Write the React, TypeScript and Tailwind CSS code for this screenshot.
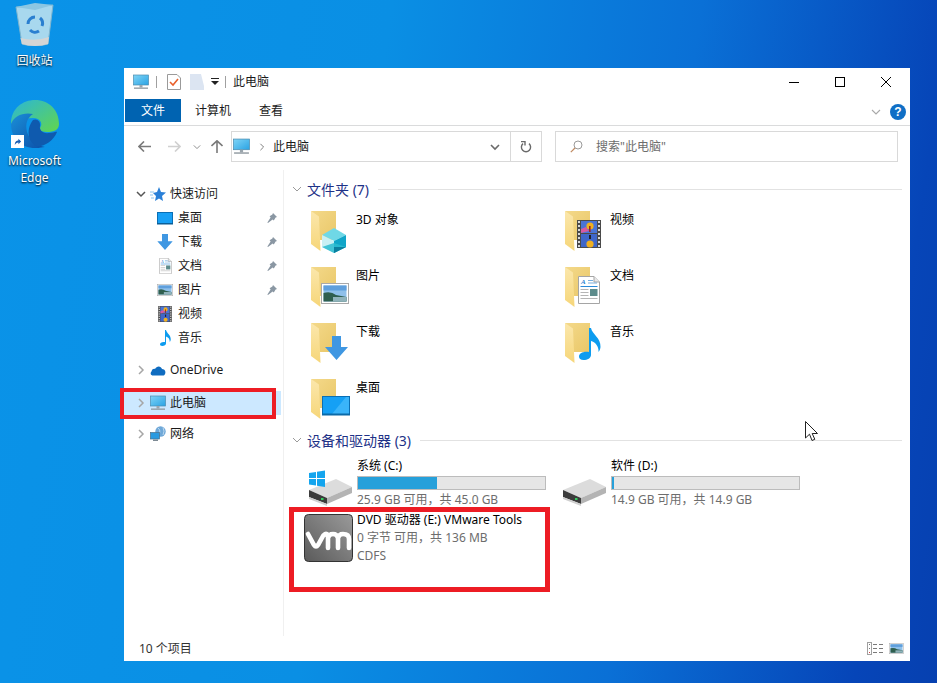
import React from "react";

const PcIcon = ({ className = "w-4 h-4" }: { className?: string }) => (
  <svg viewBox="0 0 16 16" className={className}>
    <defs>
      <linearGradient id="pcg" x1="0" y1="0" x2="1" y2="1">
        <stop offset="0" stopColor="#7fd4f6" />
        <stop offset="1" stopColor="#2aa3e4" />
      </linearGradient>
    </defs>
    <rect x="0.5" y="1" width="15" height="10" fill="url(#pcg)" stroke="#4a8cb0" strokeWidth="0.7" />
    <rect x="6.5" y="11" width="3" height="2.5" fill="#9aa5ad" />
    <rect x="1" y="13.5" width="14" height="1.3" fill="#8d979e" />
  </svg>
);

const Chevron = ({ dir, className = "", color = "#a6a6a6", w = 1.5 }: { dir: "r" | "d"; className?: string; color?: string; w?: number }) => (
  <svg viewBox="0 0 10 10" className={className}>
    <path d={dir === "r" ? "M3 1 L7 5 L3 9" : "M1 3 L5 7 L9 3"} fill="none" stroke={color} strokeWidth={w} />
  </svg>
);

const Pin = () => (
  <svg viewBox="0 0 10 10" className="w-[10px] h-[10px]">
    <path d="M6 0 L10 4 L8.6 4.6 L6.8 7.6 L5.6 6.6 L1 10 L0.4 9.4 L3.6 4.6 L2.6 3.2 L5.4 1.4 Z" fill="#8a97a3" />
  </svg>
);

const Landscape = () => (
  <g>
    <rect x="0.5" y="0.5" width="27" height="20" fill="#fff" stroke="#a9a9a9" />
    <rect x="2.5" y="2.5" width="23" height="16" fill="#8fc0ea" />
    <rect x="2.5" y="2.5" width="23" height="5" fill="#5f9fdc" />
    <path d="M2.5 10 Q10 8 15 12 L25.5 14 V18.5 H2.5 Z" fill="#2f5f4f" />
    <rect x="12" y="14" width="13.5" height="4.5" fill="#90b3bb" />
  </g>
);

const FilmStrip = () => (
  <g>
    <rect x="0" y="0" width="24" height="28" fill="#4a4a4a" />
    {[1, 5, 9, 13, 17, 21, 25].map((y) => (
      <g key={y}>
        <rect x="1" y={y} width="2" height="2" fill="#d8d8d8" />
        <rect x="21" y={y} width="2" height="2" fill="#d8d8d8" />
      </g>
    ))}
    <rect x="4" y="1" width="16" height="12" fill="#4a74d6" />
    <rect x="4" y="14" width="16" height="13" fill="#3f66c8" />
    <path d="M4 9 L9 7 L12 11 L4 13 Z" fill="#d85aa0" />
    <circle cx="13" cy="6" r="3.6" fill="#f0b020" />
    <rect x="12" y="6" width="1.6" height="6" fill="#a02020" />
    <circle cx="13" cy="24" r="3.6" fill="#f0b020" />
    <rect x="12" y="15" width="2" height="4" fill="#222" />
  </g>
);

const DocThumb = () => (
  <g>
    <path d="M0.5 0.5 H16 L21.5 6 V27.5 H0.5 Z" fill="#fff" stroke="#a5a5a5" />
    <path d="M16 0.5 V6 H21.5" fill="#e8e8e8" stroke="#a5a5a5" />
    <text x="3" y="8" fontSize="7" fontStyle="italic" fontWeight="700" fill="#2a7fd0" fontFamily="Liberation Serif, serif">A</text>
    <rect x="10" y="4" width="5" height="1" fill="#7aaedc" />
    <rect x="10" y="6.5" width="9" height="1" fill="#7aaedc" />
    <rect x="2.5" y="10" width="17" height="1" fill="#2a8ad8" />
    <rect x="2.5" y="13" width="8" height="1" fill="#b5b5b5" />
    <rect x="2.5" y="16" width="8" height="1" fill="#b5b5b5" />
    <rect x="2.5" y="19" width="8" height="1" fill="#b5b5b5" />
    <rect x="2.5" y="22" width="17" height="1" fill="#b5b5b5" />
    <rect x="12" y="13" width="7.5" height="7" fill="#5d8c8c" />
  </g>
);

const Folder = ({ children }: { children?: React.ReactNode }) => (
  <svg viewBox="0 0 48 48" className="w-12 h-12 shrink-0">
    <defs>
      <linearGradient id="fb" x1="0" y1="0" x2="1" y2="1">
        <stop offset="0" stopColor="#f4d98a" />
        <stop offset="1" stopColor="#e9c768" />
      </linearGradient>
      <linearGradient id="ff" x1="0" y1="0" x2="0" y2="1">
        <stop offset="0" stopColor="#fbe7ac" />
        <stop offset="1" stopColor="#f6d679" />
      </linearGradient>
    </defs>
    <path d="M5 2 H30 V31 H14 Z" fill="url(#fb)" />
    <path d="M5 2 L13 7.5 L14.5 42 L5 35 Z" fill="url(#ff)" />
    {children}
  </svg>
);

const Cube = () => (
  <g transform="translate(16 19)">
    <path d="M0 7 L12 0 L24 7 L12 13 Z" fill="#6fd8e6" />
    <path d="M0 7 L12 13 V25 L0 19 Z" fill="#c9f0f4" />
    <path d="M12 13 L24 7 V19 L12 25 Z" fill="#10a5c8" />
    <path d="M0 19 L12 15 L24 19 L12 25 Z" fill="#2bbcd0" opacity="0.85" />
    <path d="M12 19 L24 19 L12 25 Z" fill="#0b7f9f" />
  </g>
);

const DownArrow = ({ c = "#3f97e2" }: { c?: string }) => (
  <path d="M7 0 H16 V11 H23 L11.5 24 L0 11 H7 Z" fill={c} />
);

const Note = ({ c = "#0d9cef" }: { c?: string }) => (
  <path d="M10 0 H12 C13 6 22 10 21.5 19 C21.3 21 20.5 23 19.5 24 C20 18 16 14 12 13 V27 C12 30 8.5 32 4.5 32 C1.5 32 0 30.5 0 28.5 C0 25.5 4 23 10 24 Z" fill={c} />
);

const DesktopThumb = () => (
  <g>
    <rect x="0.5" y="0.5" width="27" height="18" fill="#15a0f5" stroke="#0a6fb5" />
    <path d="M10 18 L24 1 H27 V18 Z" fill="#3ab4fa" />
    <rect x="0" y="17.5" width="28" height="2" fill="#0b6aa8" />
  </g>
);

const Row = ({ icon, label, pin, className = "" }: { icon: React.ReactNode; label: string; pin?: boolean; className?: string }) => (
  <div className={`h-6 flex items-center pl-[33px] ${className}`}>
    <div className="w-4 h-4 flex items-center justify-center mr-[5px]">{icon}</div>
    <span>{label}</span>
    {pin && (
      <span className="ml-auto mr-[4px]">
        <Pin />
      </span>
    )}
  </div>
);

const TopRow = ({ icon, label, open, className = "" }: { icon: React.ReactNode; label: string; open?: boolean; className?: string }) => (
  <div className={`h-6 flex items-center ${className}`}>
    <div className="w-[26px] flex justify-end pr-[4px]">
      <Chevron dir={open ? "d" : "r"} color={open ? "#555" : "#a6a6a6"} className="w-[10px] h-[10px]" />
    </div>
    <div className="w-4 h-4 flex items-center justify-center mr-[4px]">{icon}</div>
    <span>{label}</span>
  </div>
);

const GroupHeader = ({ text }: { text: string }) => (
  <div className="h-5 flex items-center pl-[7px] pr-[8px]">
    <Chevron dir="d" color="#9a9a9a" w={1} className="w-[10px] h-[10px] mr-[5px]" />
    <span className="text-[14px] text-[#1e3287] whitespace-nowrap">{text}</span>
    <div className="flex-1 h-px bg-[#e2e2e2] ml-[9px]" />
  </div>
);

const FolderItem = ({ label, children }: { label: string; children?: React.ReactNode }) => (
  <div className="h-12 flex text-black">
    <Folder>{children}</Folder>
    <span className="ml-[2px] mt-[2px]">{label}</span>
  </div>
);

const DriveSvg = ({ win }: { win?: boolean }) => (
  <svg viewBox="0 0 48 42" className="w-12 h-[42px] shrink-0">
    <path d="M2 25 L29 14 L45 22 L20 33 Z" fill="#dcdcdc" />
    <path d="M20 33 L45 22 V28 L20 39 Z" fill="#b4b4b4" />
    <path d="M2 25 L20 33 V39 L2 32 Z" fill="#3c3c3c" />
    <path d="M2 32 L20 39 V41 L2 34 Z" fill="#cfcfcf" />
    <rect x="14" y="33" width="2.5" height="2" fill="#35d060" />
    {win && (
      <g fill="#14a5ee">
        <path d="M2 8 L9 7 V13 H2 Z" />
        <path d="M10 6.8 L18 5.5 V13 H10 Z" />
        <path d="M2 14 H9 V20.5 L2 19.5 Z" />
        <path d="M10 14 H18 V22 L10 20.7 Z" />
      </g>
    )}
  </svg>
);

const VmLogo = () => (
  <svg viewBox="0 0 49 48" className="w-[49px] h-12 shrink-0">
    <defs>
      <linearGradient id="vmg" x1="0" y1="1" x2="1" y2="0">
        <stop offset="0" stopColor="#5a5a5a" />
        <stop offset="1" stopColor="#9a9a9a" />
      </linearGradient>
    </defs>
    <rect x="0.5" y="0.5" width="48" height="47" rx="4" fill="url(#vmg)" stroke="#333" />
    <path
      d="M4 20 L10 31 Q12 34 14 31 L19 22 M20 21 Q22 19 24 21 V34 M24 24 Q25 20 29 20 Q33 20 34 24 V34 M34 24 Q35 20 39 20 Q45 20 45 25 V34"
      fill="none"
      stroke="#fff"
      strokeWidth="4.6"
      strokeLinecap="round"
    />
  </svg>
);

const Bar = ({ pct }: { pct: string }) => (
  <div className="w-[189px] h-[15px] border border-[#bcbcbc] bg-[#e6e6e6] my-[2px]">
    <div className="h-full bg-[#26a0da]" style={{ width: pct }} />
  </div>
);

const Drive = ({ name, free, pct, win }: { name: string; free: string; pct: string; win?: boolean }) => (
  <div className="h-[50px] flex">
    <div className="pt-[7px] -ml-[2px] mr-[2px]">
      <DriveSvg win={win} />
    </div>
    <div className="flex flex-col">
      <span className="h-[16px] leading-[16px] text-black">{name}</span>
      <Bar pct={pct} />
      <span className="h-[16px] leading-[16px] text-[#6d6d6d]">{free}</span>
    </div>
  </div>
);

export default function App() {
  return (
    <div className="relative w-[937px] h-[683px] overflow-hidden bg-[linear-gradient(98deg,#0a93e8_0%,#0a8fe4_38%,#0a70d6_68%,#0645b8_92%,#0640b0_100%)] font-['Noto_Sans','Noto_Sans_CJK_SC',sans-serif] text-[12px]">
      {/* desktop icons */}
      <div className="absolute left-0 top-[2px] w-[69px] flex flex-col items-center text-white [text-shadow:0_1px_2px_#000]">
        <svg viewBox="0 0 40 44" className="w-[40px] h-[44px]">
          <path d="M1 5 L38 3 L33 42 Q20 46 7 42 Z" fill="#a8d8ee" stroke="#7fb5cf" strokeWidth="1" />
          <path d="M1 5 L20 1 L38 3 L20 8 Z" fill="#8cc6e2" />
          <path d="M5.5 36 Q20 40 34 35 L33 42 Q20 46 7 42 Z" fill="#d5d5d5" />
          <g fill="none" stroke="#2a7fd0" strokeWidth="3">
            <path d="M13 22 A7 7 0 0 1 20 15" />
            <path d="M25 16 A7 7 0 0 1 27 24" />
            <path d="M24 29 A7 7 0 0 1 15 28" />
          </g>
        </svg>
        <span className="mt-[7px] leading-[16px]">回收站</span>
      </div>
      <div className="absolute left-0 top-[100px] w-[69px] flex flex-col items-center text-white [text-shadow:0_1px_2px_#000]">
        <div className="relative w-12 h-12">
          <svg viewBox="0 0 48 48" className="w-12 h-12">
            <defs>
              <linearGradient id="eg1" x1="0" y1="0" x2="1" y2="1">
                <stop offset="0" stopColor="#2bb6d8" />
                <stop offset="1" stopColor="#62d64c" />
              </linearGradient>
              <linearGradient id="eg2" x1="0" y1="0" x2="1" y2="1">
                <stop offset="0" stopColor="#1a8fd8" />
                <stop offset="1" stopColor="#0c4fa8" />
              </linearGradient>
            </defs>
            <path d="M0 24 C0 8 12 0 24 0 C38 0 48 10 48 24 C48 30 43 32 36 32 C29 32 28 29 30 26 C31 24 30 18 22 18 C12 18 4 22 0 24 Z" fill="url(#eg1)" />
            <path d="M0 24 C3 16 12 12 22 14 C16 18 14 24 16 32 C18 39 26 46 34 47 C28 48 26 48 24 48 C10 48 0 38 0 24 Z" fill="url(#eg2)" />
            <path d="M22 20 C26 18 30 22 29 26 C28 30 32 34 38 33 C42 33 45 31 46 32 C42 42 32 47 26 46 C18 44 14 30 22 20 Z" fill="#0f5aae" />
          </svg>
          <div className="absolute left-0 bottom-0 w-[13px] h-[13px] bg-white flex items-center justify-center">
            <svg viewBox="0 0 10 10" className="w-[9px] h-[9px]">
              <path d="M2 9 C2 5 4 4 6 4 V2 L9 5 L6 8 V6 C4 6 3 7 2 9 Z" fill="#1a5fb4" />
            </svg>
          </div>
        </div>
        <span className="mt-[4px] leading-[17px]">Microsoft</span>
        <span className="leading-[17px]">Edge</span>
      </div>

      {/* window */}
      <div className="absolute left-[124px] top-[68px] w-[786px] h-[593px] bg-white flex flex-col text-[#1a1a1a]">
        {/* title bar */}
        <div className="h-[28px] flex items-center shrink-0">
          <PcIcon className="w-4 h-4 ml-[9px]" />
          <div className="w-px h-3 bg-[#a0a0a0] ml-[7px]" />
          <svg viewBox="0 0 14 16" className="w-[14px] h-4 ml-[10px]">
            <path d="M0.5 0.5 H10 L13.5 4 V15.5 H0.5 Z" fill="#fff" stroke="#9a9a9a" />
            <path d="M3 8 L6 11 L11 5" fill="none" stroke="#e8602c" strokeWidth="1.6" />
          </svg>
          <svg viewBox="0 0 14 16" className="w-[14px] h-4 ml-[9px]">
            <path d="M0 0 H11 L14 12 V16 H0 Z" fill="#dce5f2" />
          </svg>
          <svg viewBox="0 0 8 8" className="w-2 h-2 ml-[7px]">
            <rect x="0" y="0" width="8" height="1" fill="#222" />
            <path d="M0 3 H8 L4 7 Z" fill="#222" />
          </svg>
          <div className="w-px h-3 bg-[#a0a0a0] ml-[6px]" />
          <span className="ml-[7px]">此电脑</span>
          <div className="ml-auto flex items-center">
            <div className="w-[46px] flex justify-center">
              <div className="w-[10px] h-px bg-black" />
            </div>
            <div className="w-[46px] flex justify-center">
              <div className="w-[10px] h-[10px] border border-black" />
            </div>
            <div className="w-[46px] flex justify-center mr-[1px]">
              <svg viewBox="0 0 10 10" className="w-[10px] h-[10px]">
                <path d="M0 0 L10 10 M10 0 L0 10" stroke="#000" strokeWidth="1" />
              </svg>
            </div>
          </div>
        </div>
        {/* ribbon tabs */}
        <div className="h-[30px] shrink-0 border-b border-[#dadbdc] flex pt-[3px] pr-[4px]">
          <div className="w-[56px] h-[23px] ml-px bg-[#0063b1] text-white flex items-center justify-center">文件</div>
          <span className="h-[23px] leading-[23px] ml-[14px]">计算机</span>
          <span className="h-[23px] leading-[23px] ml-[28px]">查看</span>
          <div className="ml-auto flex items-center h-[23px] mt-[1px]">
            <Chevron dir="d" color="#a8a8a8" w={1.1} className="w-[10px] h-[10px] mr-[9px]" />
            <div className="w-4 h-4 rounded-full bg-[#0f6fc6] text-white font-bold text-[12px] leading-4 text-center font-['Liberation_Sans',sans-serif]">?</div>
          </div>
        </div>
        {/* nav row */}
        <div className="h-[44px] shrink-0 flex items-start pt-[5px]">
          <div className="w-[107px] h-[31px] flex items-center pl-[14px]">
            <svg viewBox="0 0 13 11" className="w-[13px] h-[11px]">
              <path d="M6 0.5 L1 5.5 L6 10.5 M1 5.5 H13" fill="none" stroke="#7a7a7a" strokeWidth="1.6" />
            </svg>
            <svg viewBox="0 0 13 11" className="w-[13px] h-[11px] ml-[17px]">
              <path d="M7 0.5 L12 5.5 L7 10.5 M12 5.5 H0" fill="none" stroke="#d0d0d0" strokeWidth="1.6" />
            </svg>
            <Chevron dir="d" color="#8a8a8a" w={1.2} className="w-[8px] h-[8px] ml-[12px]" />
            <svg viewBox="0 0 12 13" className="w-3 h-[13px] ml-[10px]">
              <path d="M0.5 6 L6 0.8 L11.5 6 M6 0.8 V13" fill="none" stroke="#7a7a7a" strokeWidth="1.6" />
            </svg>
          </div>
          <div className="w-[311px] h-[31px] border border-[#d9d9d9] flex items-center">
            <PcIcon className="w-[17px] h-[17px] ml-[1px]" />
            <Chevron dir="r" color="#7a7a7a" w={1.2} className="w-[8px] h-[8px] ml-[8px]" />
            <span className="ml-[7px]">此电脑</span>
            <div className="ml-auto w-[30px] h-full flex items-center justify-center">
              <Chevron dir="d" color="#6a6a6a" w={1.6} className="w-[10px] h-[10px]" />
            </div>
            <div className="w-[31px] h-full border-l border-[#d9d9d9] flex items-center justify-center">
              <svg viewBox="0 0 12 12" className="w-[12px] h-[12px]">
                <path d="M3 2.6 A4.6 4.6 0 1 0 9 2.6" fill="none" stroke="#6a6a6a" strokeWidth="1.4" />
                <path d="M2 0 H6 V4" fill="none" stroke="#6a6a6a" strokeWidth="1.4" transform="translate(-1 0.5)" />
              </svg>
            </div>
          </div>
          <div className="ml-[13px] w-[343px] h-[31px] border border-[#d9d9d9] flex items-center pl-[14px] text-[#6d6d6d]">
            <svg viewBox="0 0 13 13" className="w-[13px] h-[13px]">
              <circle cx="8" cy="5" r="4" fill="none" stroke="#9a9a9a" strokeWidth="1" />
              <path d="M5 8 L0.8 12.2" stroke="#c08a60" strokeWidth="1.2" />
            </svg>
            <span className="ml-[13px]">搜索"此电脑"</span>
          </div>
        </div>
        {/* main */}
        <div className="flex-1 flex min-h-0">
          {/* sidebar */}
          <div className="w-[160px] shrink-0 border-r border-[#f0f0f0] pt-[12px] pr-[2px]">
            <TopRow
              open
              label="快速访问"
              icon={
                <svg viewBox="0 0 16 16" className="w-4 h-4">
                  <path d="M9 1 L11 6 L16 6.5 L12 10 L13 15 L9 12.5 L5 15 L6 10 L3 7 L7 6 Z" fill="#2a80d8" />
                  <path d="M0 6 H4 M0 9 H3 M1 12 H4" stroke="#8cc4ee" strokeWidth="1" />
                </svg>
              }
            />
            <Row
              pin
              label="桌面"
              icon={
                <svg viewBox="0 0 16 13" className="w-4 h-[13px]">
                  <rect x="0.5" y="0.5" width="15" height="11" fill="#18a0f5" stroke="#0a6fb5" />
                  <rect x="0" y="11" width="16" height="1.5" fill="#0b5f98" />
                </svg>
              }
            />
            <Row
              pin
              label="下载"
              icon={
                <svg viewBox="0 0 23 24" className="w-4 h-4">
                  <DownArrow />
                </svg>
              }
            />
            <Row
              pin
              label="文档"
              icon={
                <svg viewBox="0 0 22 28" className="w-[13px] h-4">
                  <DocThumb />
                </svg>
              }
            />
            <Row
              pin
              label="图片"
              icon={
                <svg viewBox="0 0 28 21" className="w-4 h-3">
                  <Landscape />
                </svg>
              }
            />
            <Row
              label="视频"
              icon={
                <svg viewBox="0 0 24 28" className="w-[14px] h-4">
                  <FilmStrip />
                </svg>
              }
            />
            <Row
              label="音乐"
              icon={
                <svg viewBox="0 0 22 32" className="w-[11px] h-4">
                  <Note />
                </svg>
              }
            />
            <TopRow
              className="mt-2"
              label="OneDrive"
              icon={
                <svg viewBox="0 0 16 11" className="w-4 h-[11px]">
                  <path d="M3 10.5 C0.5 10.5 0 8 1.5 6.5 C2 4 4 3.5 5 4 C6.5 0.5 11 0.5 12 4 C15 4 16 7 15 9 C14.5 10 14 10.5 13 10.5 Z" fill="#0f6cc0" />
                </svg>
              }
            />
            <TopRow className="mt-[9px] bg-[#cce8ff]" label="此电脑" icon={<PcIcon className="w-4 h-4" />} />
            <TopRow
              className="mt-[7px]"
              label="网络"
              icon={
                <svg viewBox="0 0 16 16" className="w-4 h-4">
                  <circle cx="10.5" cy="5.5" r="5.2" fill="#6fa8d8" />
                  <path d="M8 2 Q11 4 9 9 M13 1.5 Q15 5 13 9" stroke="#cfe4f5" fill="none" strokeWidth="0.8" />
                  <rect x="0.5" y="6.5" width="9" height="6.5" fill="#2a9ae0" stroke="#4a6f8a" strokeWidth="0.7" />
                  <rect x="3" y="13.5" width="5" height="1.5" fill="#7d8a94" />
                </svg>
              }
            />
          </div>
          {/* content */}
          <div className="flex-1 pt-[9px] pl-[1px]">
            <GroupHeader text="文件夹 (7)" />
            <div className="grid grid-cols-[254px_254px] gap-y-2 pl-[21px] mt-[10px]">
              <FolderItem label="3D 对象">
                <Cube />
              </FolderItem>
              <FolderItem label="视频">
                <g transform="translate(17 11)">
                  <FilmStrip />
                </g>
              </FolderItem>
              <FolderItem label="图片">
                <g transform="translate(15 18)">
                  <Landscape />
                </g>
              </FolderItem>
              <FolderItem label="文档">
                <g transform="translate(18 11)">
                  <DocThumb />
                </g>
              </FolderItem>
              <FolderItem label="下载">
                <g transform="translate(19 15)">
                  <DownArrow />
                </g>
              </FolderItem>
              <FolderItem label="音乐">
                <g transform="translate(19 7)">
                  <Note />
                </g>
              </FolderItem>
              <FolderItem label="桌面">
                <g transform="translate(16 19)">
                  <DesktopThumb />
                </g>
              </FolderItem>
            </div>
            <div className="mt-[5px]">
              <GroupHeader text="设备和驱动器 (3)" />
            </div>
            <div className="grid grid-cols-[254px_254px] pl-[24px] mt-[8px]">
              <Drive name="系统 (C:)" free="25.9 GB 可用，共 45.0 GB" pct="42%" win />
              <Drive name="软件 (D:)" free="14.9 GB 可用，共 14.9 GB" pct="1%" />
            </div>
            <div className="flex pl-[19px] mt-[3px] h-[72px]">
              <div className="pt-[3px]">
                <VmLogo />
              </div>
              <div className="ml-[4px] flex flex-col leading-[18px] text-[#6d6d6d]">
                <span className="text-black">DVD 驱动器 (E:) VMware Tools</span>
                <span>0 字节 可用，共 136 MB</span>
                <span>CDFS</span>
              </div>
            </div>
          </div>
        </div>
        {/* status bar */}
        <div className="h-[25px] shrink-0 flex items-center pl-[15px] pr-[6px] text-[#333]">
          <span>10 个项目</span>
          <div className="ml-auto flex items-center gap-[6px]">
            <svg viewBox="0 0 16 13" className="w-4 h-[13px]">
              <rect x="0.5" y="0.5" width="4" height="12" fill="#fff" stroke="#a0a0a0" />
              <rect x="2" y="2" width="1" height="1" fill="#777" />
              <rect x="2" y="6" width="1" height="1" fill="#777" />
              <rect x="2" y="10" width="1" height="1" fill="#d04040" />
              <path d="M6 2.5 H10 M12 2.5 H16 M6 6.5 H10 M12 6.5 H16 M6 10.5 H10 M12 10.5 H16" stroke="#7a7a7a" strokeWidth="1" />
            </svg>
            <svg viewBox="0 0 28 21" className="w-[15px] h-[11px]">
              <Landscape />
            </svg>
          </div>
        </div>
      </div>

      {/* red annotation boxes */}
      <div className="absolute left-[120px] top-[388px] w-[156px] h-[31px] border-[4px] border-[#ed1c24]" />
      <div className="absolute left-[289px] top-[507px] w-[261px] h-[85px] border-[5px] border-[#ed1c24]" />

      {/* mouse pointer */}
      <svg viewBox="0 0 14 21" className="absolute left-[805px] top-[421px] w-[14px] h-[21px]">
        <path d="M0.5 0.5 V17 L4.5 13.2 L7 19.5 L9.8 18.3 L7.2 12.5 L12.5 12.5 Z" fill="#fff" stroke="#222" strokeWidth="1" />
      </svg>
    </div>
  );
}
